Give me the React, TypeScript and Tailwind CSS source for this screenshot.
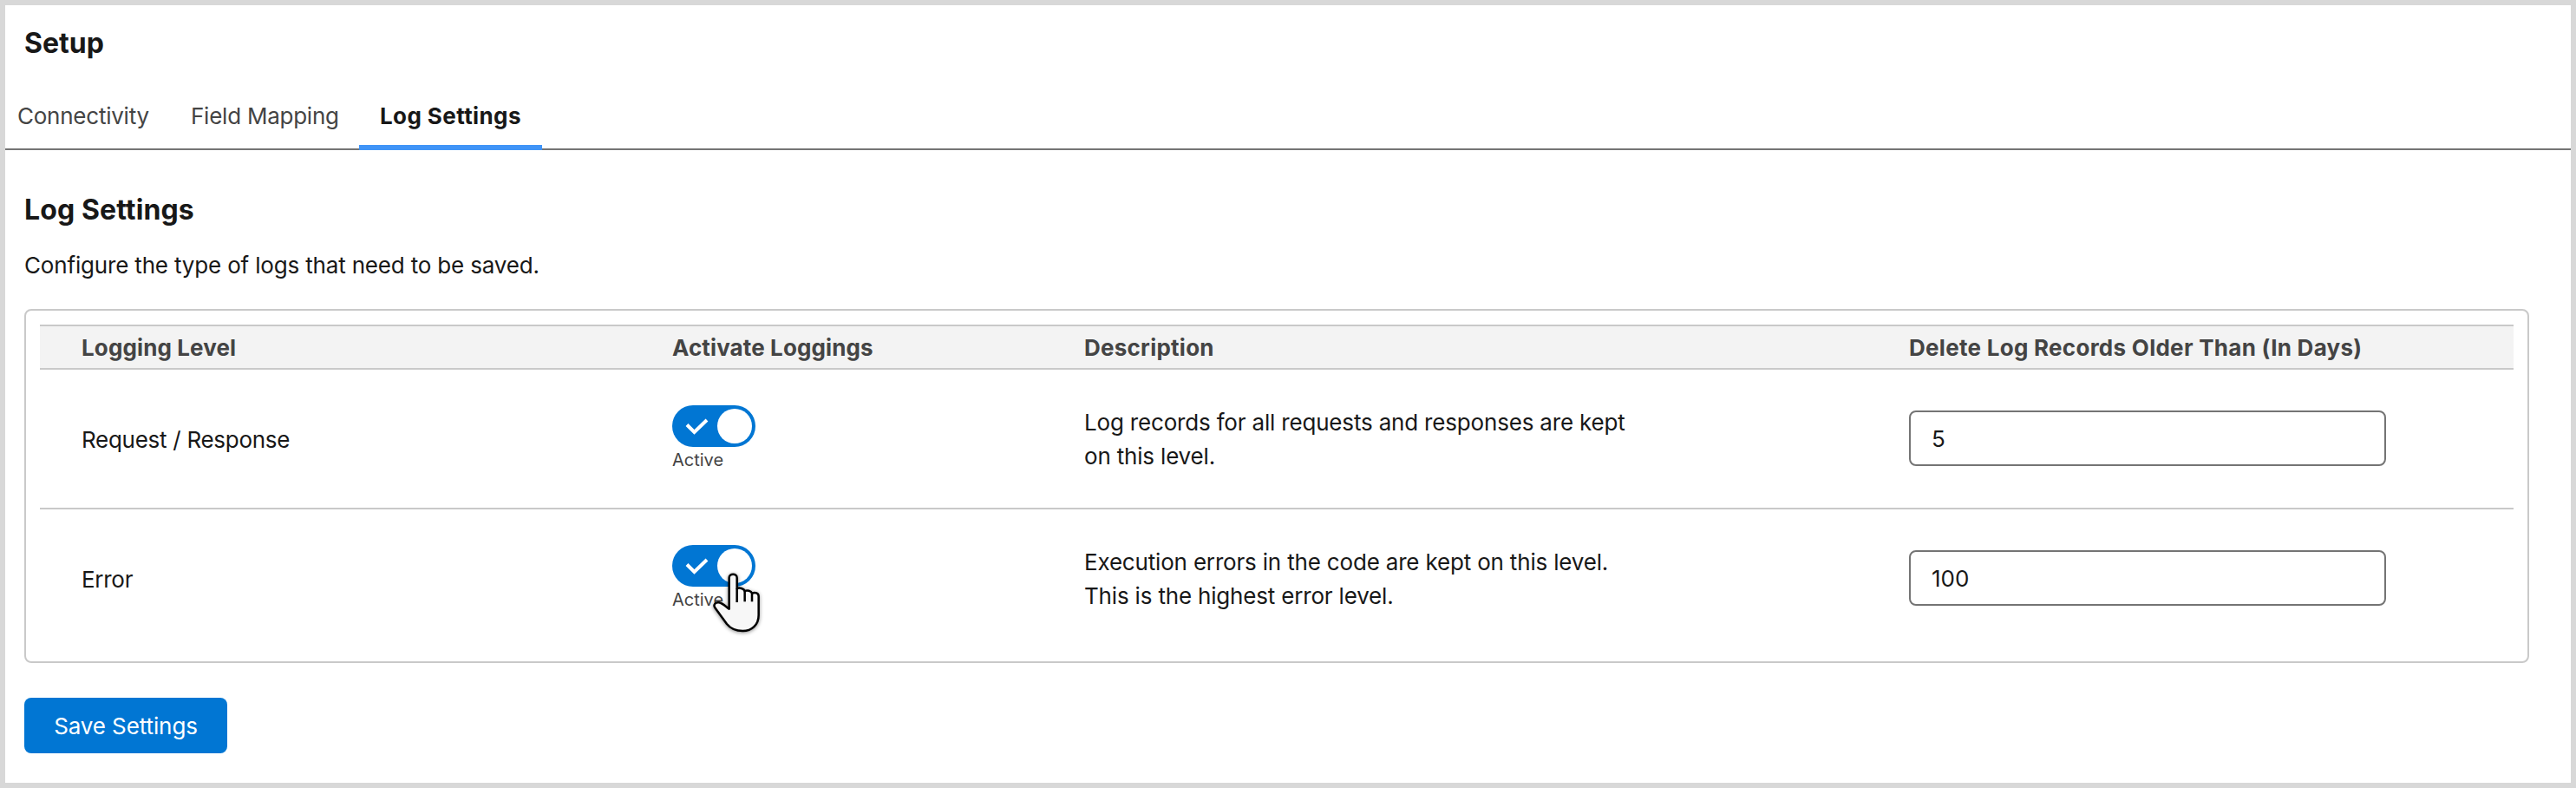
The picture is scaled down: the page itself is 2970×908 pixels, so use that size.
import { useState } from 'react'

type LogLevel = {
    name: string
    description: string[]
    days: string
    hovered?: boolean
}

const levels: LogLevel[] = [
    {
        name: 'Request / Response',
        description: ['Log records for all requests and responses are kept', 'on this level.'],
        days: '5'
    },
    {
        name: 'Error',
        description: ['Execution errors in the code are kept on this level.', 'This is the highest error level.'],
        days: '100',
        hovered: true
    }
]

function HandCursor() {
    return (
        <svg
            className="pointer-events-none absolute left-[45px] top-[31px] h-[73px] w-[60px] overflow-visible drop-shadow-[0_1px_2px_rgba(0,0,0,0.45)]"
            viewBox="240 177 180 219"
            fill="none"
            stroke="#000"
            strokeWidth="7.5"
            strokeLinejoin="round"
        >
            <path
                fill="#f7f7f7"
                d="M302 305V197C302 181 329 181 329 197V234C338 231 353 234 356 243C364 239 378 242 381 251C392 246 404 250 404 261V326C404 360 380 381 349 381C326 381 307 373 294 357L253 301C246 290 255 281 267 283C281 286 291 298 302 305Z"
            />
            <path d="M329 234V282M356 243V280M381 251V280" />
        </svg>
    )
}

function Toggle({ hovered }: { hovered?: boolean }) {
    const [checked, setChecked] = useState(true)

    return (
        <div className="relative w-24">
            <button
                role="switch"
                aria-checked={checked}
                onClick={() => setChecked(!checked)}
                className="flex h-12 w-24 items-center justify-between rounded-full bg-[#0176d3] pl-[15px] pr-1"
            >
                <svg className="mt-[2px] h-5 w-[27px]" viewBox="0 0 27 20" fill="none" stroke="#fff" strokeWidth="4">
                    <path d="M2 7.5L10.5 16L25 2" />
                </svg>
                <span className="size-10 rounded-full bg-white" />
            </button>
            <span className="mt-[3px] block text-[20px] leading-6 text-[#444]">{checked ? 'Active' : 'Inactive'}</span>
            {hovered && <HandCursor />}
        </div>
    )
}

export default function App() {
    return (
        <div className="h-[908px] w-[2970px] overflow-hidden border-[6px] border-[#d8d8d8] bg-white font-['Inter',sans-serif] text-[26px] text-[#181818]">
            <h1 className="mt-6 pl-[22px] text-[32px] font-bold leading-10">Setup</h1>
            <nav className="mt-6 flex h-[79px] border-b-2 border-[#747474] tracking-[-0.24px] text-[#444]">
                <button className="h-[79px] w-[190px] pl-[14px] text-left">Connectivity</button>
                <button className="h-[79px] w-[218px] pl-6 text-left">Field Mapping</button>
                <button className="h-[79px] w-[211px] pl-6 text-left font-bold tracking-[0.4px] text-[#181818] shadow-[inset_0_-6px_#4094f7]">Log Settings</button>
            </nav>
            <main className="pl-[22px] pr-12">
                <h2 className="mt-[49px] text-[32px] font-bold leading-10 tracking-[0.1px]">Log Settings</h2>
                <p className="mt-6 leading-10 tracking-[-0.17px]">Configure the type of logs that need to be saved.</p>
                <section className="mt-[30px] rounded-lg border-2 border-[#c9c9c9] p-4">
                    <div className="grid h-[52px] grid-cols-[681px_475px_951px_745px] items-center border-y-2 border-[#c9c9c9] bg-[#f3f3f3] font-bold tracking-[0.12px] text-[#444] *:pl-12">
                        <div>Logging Level</div>
                        <div>Activate Loggings</div>
                        <div className="tracking-[0.25px]">Description</div>
                        <div className="tracking-[0.28px]">Delete Log Records Older Than (In Days)</div>
                    </div>
                    {levels.map(level => (
                        <div key={level.name} className="grid h-[161px] grid-cols-[681px_475px_951px_745px] border-b-2 border-[#c9c9c9] leading-[39px] *:pl-12 last:h-[159px] last:border-b-0">
                            <div className="pt-[61px] tracking-[-0.28px]">{level.name}</div>
                            <div className="pt-[41px]"><Toggle hovered={level.hovered} /></div>
                            <div className="pt-[41px] tracking-[-0.18px]">
                                {level.description.map(line => <p key={line}>{line}</p>)}
                            </div>
                            <div className="pt-[47px]">
                                <input defaultValue={level.days} className="block h-16 w-[550px] rounded-lg border-2 border-[#747474] bg-white px-6 outline-none" />
                            </div>
                        </div>
                    ))}
                </section>
                <button className="mt-10 h-16 w-[234px] rounded-lg bg-[#0176d3] tracking-[-0.1px] text-white">Save Settings</button>
            </main>
        </div>
    )
}
